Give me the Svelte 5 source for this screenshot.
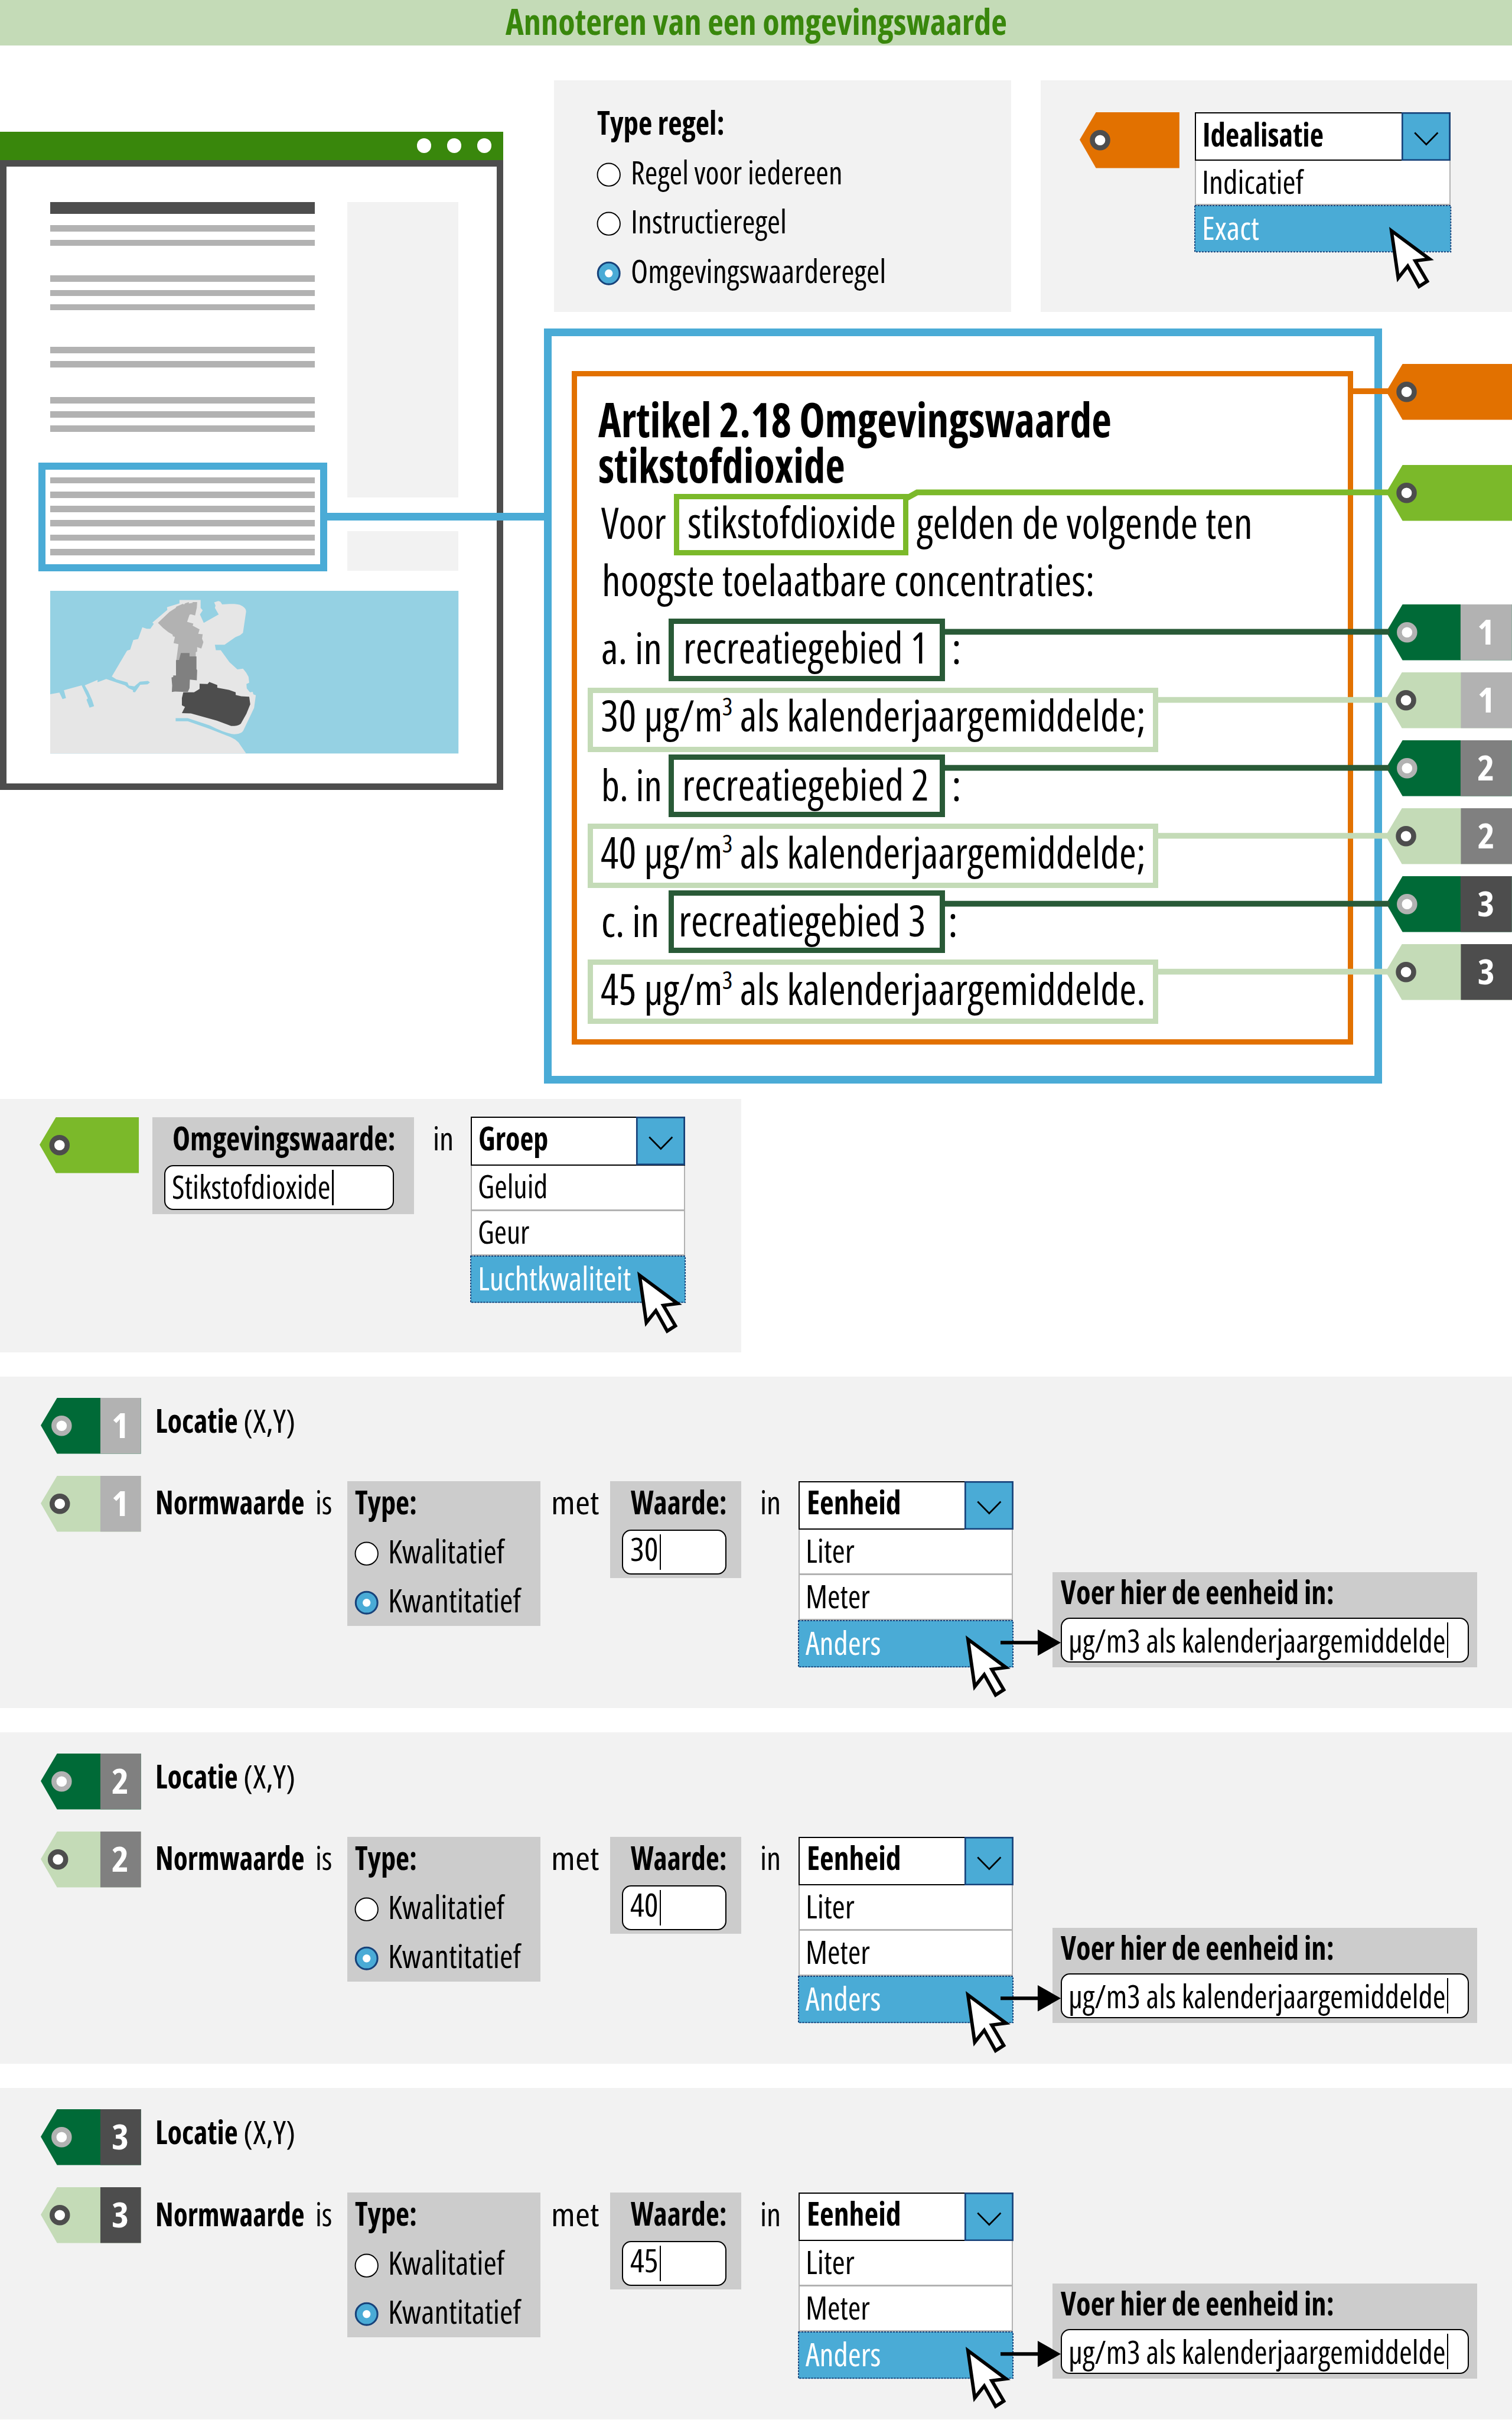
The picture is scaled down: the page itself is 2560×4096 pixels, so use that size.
<script>
  // Lengths are written in design units; one rem equals 100 units.
  const rem = (n) => `${n / 100}rem`;

  const METRICS = {
    title: { h: 80, base: 65 },
    head: { h: 100, base: 86.5 },
    body: { h: 90, base: 78 },
    md: { h: 72, base: 62.5 },
  };

  const NUMBER_BG = { 1: '#b2b2b2', 2: '#808080', 3: '#4d4d4d' };
  const ORANGE = '#e27100';
  const LIME = '#7bb92a';
  const FOREST = '#006a37';
  const MINT = '#c4dbb7';

  const lineGroups = [2, 3, 2, 3];

  const rules = [
    { letter: 'a. in', lw: 134, area: 'recreatiegebied 1', pad: 20, aw: 539, colon: 14, dy: 22, value: '30', end: ';', vdy: 19.9 },
    { letter: 'b. in', lw: 134, area: 'recreatiegebied 2', pad: 18, aw: 544, colon: 14, dy: 23.7, value: '40', end: ';', vdy: 22.1 },
    { letter: 'c. in', lw: 128, area: 'recreatiegebied 3', pad: 10, aw: 545, colon: 7, dy: 24.3, value: '45', end: '.', vdy: 23.8 },
  ];

  const norms = [
    { n: 1, value: '30', hole: 42 },
    { n: 2, value: '40', hole: 38 },
    { n: 3, value: '45', hole: 42 },
  ];

  const units = [
    { label: 'Liter', w: 108 },
    { label: 'Meter', w: 142 },
    { label: 'Anders', w: 166, active: true },
  ];
  const groups = [
    { label: 'Geluid', w: 154 },
    { label: 'Geur', w: 114 },
    { label: 'Luchtkwaliteit', w: 338, active: true },
  ];
  const precision = [
    { label: 'Indicatief', w: 224 },
    { label: 'Exact', w: 126, active: true },
  ];
</script>

{#snippet txt(s, w, kind = 'md', bold = false)}
  <svg class="txt {kind}" class:bold width={rem(w)} height={rem(METRICS[kind].h)} viewBox="0 0 {w} {METRICS[kind].h}">
    <text x="0" y={METRICS[kind].base} textLength={w} lengthAdjust="spacingAndGlyphs">{s}</text>
  </svg>
{/snippet}

{#snippet tag(fill, w, split, hole, n, nx)}
  <svg class="tag" width={rem(w)} height={rem(123)} viewBox="0 0 {w} 123">
    <path d="M0 60.5 36 0H{w}V123H36Z" {fill} />
    {#if n}
      <rect x={split} y="0" width={w - split} height="123" fill={NUMBER_BG[n]} />
      <text x={split + nx} y="89" textLength="38" lengthAdjust="spacingAndGlyphs">{n}</text>
    {/if}
    <circle cx={hole} cy="61.6" r="17" fill="#fff" stroke={fill === FOREST ? '#b2b2b2' : '#4d4d4d'} stroke-width="11" />
  </svg>
{/snippet}

{#snippet radio(label, w, on)}
  <div class="radio" class:on>
    <svg width={rem(54)} height={rem(54)} viewBox="0 0 54 54">
      <circle cx="27" cy="27" r={on ? 24 : 25} />
      {#if on}<circle class="dot" cx="27" cy="27" r="8.7" />{/if}
    </svg>
    {@render txt(label, w)}
  </div>
{/snippet}

{#snippet select(label, lw, options)}
  <div class="select">
    <div class="current">
      {@render txt(label, lw, 'md', true)}
      <svg class="toggle" viewBox="0 0 108 107" width={rem(108)} height={rem(107)}>
        <rect x="1.7" y="1.7" width="104.6" height="103.6" />
        <path d="M29 45 54.500 71 80 45" />
      </svg>
    </div>
    {#each options as o}
      <div class="option" class:active={o.active}>
        {#if o.active}
          <svg class="focus"><rect width="100%" height="100%" /></svg>
        {/if}
        {@render txt(o.label, o.w)}
      </div>
    {/each}
    <svg class="cursor" viewBox="0 0 99 139" width={rem(99)} height={rem(139)}>
      <path d="M5 11 89 73.500 57.500 77.500 84 122.500 66 134 41 89 20 115.500Z" />
    </svg>
  </div>
{/snippet}

<main>
  <header>{@render txt('Annoteren van een omgevingswaarde', 1106, 'title', true)}</header>

  <section class="hero">
    <div class="left">
      <div class="browser">
        <div class="bar"><i></i><i></i><i></i></div>
        <div class="page">
          <div class="columns">
            <div class="lines">
              <b></b>
              {#each lineGroups as count}
                <div class="group">{#each { length: count } as _}<i></i>{/each}</div>
              {/each}
              <div class="group marked">{#each { length: 6 } as _}<i></i>{/each}</div>
            </div>
            <div class="aside"><div></div><div></div></div>
          </div>
          <svg class="map" viewBox="144.500 701 1176.500 625" preserveAspectRatio="none">
            <rect x="144.500" y="701" width="1176.500" height="625" fill="#95d1e3" />
            <path
              fill="#e6e6e6"
              d="M144.500 1098 171 1092 180 1117 190 1113 184 1083 235 1064 253 1114 249 1119 258 1150 271 1144 265 1120 254 1087 244 1064 281 1043V1052L306 1040 360 1064 370 1075 383 1083V1090L389 1091 404 1062 425 1060 432 1053 426 1047 403 1050 387 1068 371 1065 367 1053 335 1041 322 1030 366 931 375 927 384 890 398 886 410 841 423 847H433L443 828 439 823 482 774 481 764 517 749V736H578V767L584 776 576 792 587 824 630 792 619 766 621 758 617 745 629 740 635 743 640 753C665 750 685 751 691 755 704 763 709 770 709 781L700 862 692 871 678 879 647 908H619L622 929H636L661 975 684 1003 700 1000 709 1015 716 1031 718 1054 710 1059 711 1076 720 1091 728 1089 730 1099 737 1102 732 1151 701 1238C697 1247 688 1252 675 1252 655 1250 630 1235 604 1218L541 1190H506V1202H541L603 1231 664 1263 677 1272 687 1283 709 1326H144.500Z"
            />
            <path
              fill="#b2b2b2"
              d="M455 824 488 782 506 767 508 762 527 751 530 754 533 749 544 744V750L555 747V744H568L567 765 562 796 550 791 546 793 539 820 557 827 555 835 575 849 571 866 584 868 582 885 586 898 580 923 568 917V934L564 937V955L508 967 514 906 500 902 504 878 498 876 497 869 485 860 470 844Z"
            />
            <path
              fill="#808080"
              d="M521 940H546V953H566V1002L568 1006 567 1045 547 1042 546 1075 541 1090 504 1088 495 1090 496 1065 494 1034 499 1032V1026H507V967L516 966Z"
            />
            <path
              fill="#4d4d4d"
              d="M528 1091H559L575 1078V1058L598 1059 603 1051 626 1063V1073L660 1082 679 1091V1101L695 1106 718 1108 721 1137 710 1173 694 1211C688 1218 680 1221 666 1220L625 1200 550 1172 524 1171 533 1147 524 1141V1113Z"
            />
          </svg>
        </div>
        <div class="link"></div>
      </div>
    </div>

    <div class="right">
      <div class="panels">
        <div class="panel kind">
          {@render txt('Type regel:', 281, 'md', true)}
          {@render radio('Regel voor iedereen', 467)}
          {@render radio('Instructieregel', 344)}
          {@render radio('Omgevingswaarderegel', 563, true)}
        </div>
        <div class="panel precision">
          {@render tag(ORANGE, 220, 0, 45)}
          {@render select('Idealisatie', 267, precision)}
        </div>
      </div>

      <div class="annotated">
        <article>
          <div class="frame">
            <h1>
              {@render txt('Artikel 2.18 Omgevingswaarde', 1132, 'head', true)}
              {@render txt('stikstofdioxide', 544, 'head', true)}
            </h1>
            <div class="row first">
              {@render txt('Voor', 143, 'body')}
              <div class="box lime">{@render txt('stikstofdioxide', 460, 'body')}</div>
              {@render txt('gelden de volgende ten', 741, 'body')}
            </div>
            <div class="row second">{@render txt('hoogste toelaatbare concentraties:', 1087, 'body')}</div>
            {#each rules as r}
              <div class="row area" style:--dy={rem(r.dy)}>
                <div class="letter">{@render txt(r.letter, r.lw, 'body')}</div>
                <div class="box forest" style:padding-left={rem(r.pad)}>{@render txt(r.area, r.aw, 'body')}</div>
                <div class="colon" style:margin-left={rem(r.colon)}>{@render txt(':', 22, 'body')}</div>
              </div>
              <div class="row value" style:--dy={rem(r.vdy)}>
                <div class="box mint">
                  <svg class="txt body" width={rem(1208)} height={rem(90)} viewBox="0 0 1208 90">
                    <text y="78"
                      ><tspan x="0" textLength="269" lengthAdjust="spacingAndGlyphs">{r.value} µg/m</tspan><tspan class="sup" x="268" y="43" textLength="23" lengthAdjust="spacingAndGlyphs">3</tspan><tspan x="307" y="78" textLength="895" lengthAdjust="spacingAndGlyphs">als kalenderjaargemiddelde{r.end}</tspan></text
                    >
                  </svg>
                </div>
              </div>
            {/each}
          </div>
        </article>
        <div class="tags">
          {@render tag(ORANGE, 278, 0, 45)}
          {@render tag(LIME, 278, 0, 45)}
          {#each norms as { n }}
            {@render tag(FOREST, 277, 164, 46, n, 37)}
            {@render tag(MINT, 279, 166, 45, n, 37)}
          {/each}
        </div>
        <svg class="wires" viewBox="1200 725 2135 1665">
          <path stroke={ORANGE} d="M2980 863.200H3062" />
          <path stroke={LIME} d="M1997 1097.500H2003L2023 1086.500H3064" />
          {#each norms as _, i}
            <path stroke="#295a37" d="M2082 {1393.9 + i * 299.8}H3065" />
            <path stroke={MINT} d="M2550 {1544 + i * 299.6}H3064" />
          {/each}
        </svg>
      </div>
    </div>
  </section>

  <section class="panel topic">
    {@render tag(LIME, 219, 0, 44)}
    <div class="field wide">
      {@render txt('Omgevingswaarde:', 492, 'md', true)}
      <div class="input">{@render txt('Stikstofdioxide', 350)}<i></i></div>
    </div>
    <div class="word">{@render txt('in', 46)}</div>
    {@render select('Groep', 154, groups)}
  </section>

  {#each norms as { n, value, hole }}
    <section class="panel norm">
      <div class="location">
        {@render tag(FOREST, 221, 131.5, 46, n, 25)}
        <div class="name">{@render txt('Locatie', 182, 'md', true)}</div>
        <div class="coords">{@render txt('(X,Y)', 115)}</div>
      </div>
      <div class="details">
        {@render tag(MINT, 221, 131.5, hole, n, 25)}
        <div class="name">{@render txt('Normwaarde', 329, 'md', true)}</div>
        <div class="is">{@render txt('is', 37)}</div>
        <div class="field type">
          {@render txt('Type:', 137, 'md', true)}
          {@render radio('Kwalitatief', 257)}
          {@render radio('Kwantitatief', 293, true)}
        </div>
        <div class="met">{@render txt('met', 106)}</div>
        <div class="field amount">
          {@render txt('Waarde:', 212, 'md', true)}
          <div class="input">{@render txt(value, 62)}<i></i></div>
        </div>
        <div class="in">{@render txt('in', 46)}</div>
        {@render select('Eenheid', 208, units)}
        <div class="field unit">
          {@render txt('Voer hier de eenheid in:', 603, 'md', true)}
          <div class="input">{@render txt('µg/m3 als kalenderjaargemiddelde', 832)}<i></i></div>
          <svg class="arrow" viewBox="0 0 133 58" width={rem(133)} height={rem(58)}>
            <path d="M0 25H82V0L133 29 82 58V33H0Z" />
          </svg>
        </div>
      </div>
    </section>
  {/each}
</main>

<style>
  :global(html) {
    font-size: calc(100vw / 33.35);
    overflow: hidden;
  }
  :global(body) {
    background: #fff;
  }
  main {
    width: 33.35rem;
    height: 53.35rem;
    overflow: hidden;
    color: #000;
    font-family: 'Open Sans', 'Noto Sans', 'Liberation Sans', sans-serif;
    line-height: 1;
  }
  main :global(*) {
    box-sizing: border-box;
  }
  svg {
    display: block;
    flex: none;
    overflow: visible;
  }
  .txt {
    fill: #000;
    font-stretch: 75%;
    font-weight: 400;
  }
  .txt.bold {
    font-weight: 700;
  }
  .title {
    fill: #39870c;
    font-size: 79px;
  }
  .head {
    font-size: 105px;
  }
  .body {
    font-size: 95.5px;
  }
  .md {
    font-size: 72px;
  }
  .sup {
    font-size: 54px;
  }
  .tag text {
    fill: #fff;
    font-size: 77px;
    font-weight: 700;
    font-stretch: 75%;
  }

  header {
    display: flex;
    justify-content: center;
    height: 1rem;
    padding-top: 0.12rem;
    background: #c4dbb7;
  }
  .hero {
    display: flex;
    height: 23.233rem;
    padding-top: 0.77rem;
  }
  .left {
    width: 12.003rem;
    padding-top: 1.13rem;
  }

  /* Browser sketch */
  .browser {
    position: relative;
    width: 11.095rem;
  }
  .bar {
    display: flex;
    justify-content: flex-end;
    align-items: center;
    gap: 0.345rem;
    height: 0.63rem;
    padding-right: 0.25rem;
    background: #39870c;
  }
  .bar i {
    width: 0.32rem;
    height: 0.32rem;
    border-radius: 50%;
    background: #fff;
  }
  .page {
    height: 13.89rem;
    padding: 0.776rem 0.84rem 0 0.962rem;
    border: 0.145rem solid #4d4d4d;
  }
  .columns {
    display: flex;
    justify-content: space-between;
  }
  .lines {
    width: 5.84rem;
  }
  .lines b {
    display: block;
    height: 0.272rem;
    margin-bottom: 0.248rem;
    background: #4d4d4d;
  }
  .group {
    display: grid;
    gap: 0.176rem;
  }
  .group i {
    height: 0.14rem;
    background: #b2b2b2;
  }
  .group:nth-of-type(2) {
    margin-top: 0.65rem;
  }
  .group:nth-of-type(3) {
    margin-top: 0.803rem;
  }
  .group:nth-of-type(4) {
    margin-top: 0.65rem;
  }
  .group.marked {
    margin: 0.675rem -0.27rem 0 -0.255rem;
    padding: 0.165rem 0.11rem 0.2rem 0.095rem;
    border: 0.16rem solid #4aabd6;
  }
  .aside div {
    width: 2.457rem;
    height: 6.523rem;
    background: #f2f2f2;
  }
  .aside div + div {
    height: 0.873rem;
    margin-top: 0.746rem;
  }
  .map {
    width: 9.005rem;
    height: 3.587rem;
    margin-top: 0.432rem;
  }
  .link {
    position: absolute;
    left: 7.2rem;
    top: 8.408rem;
    width: 4.83rem;
    height: 0.165rem;
    background: #4aabd6;
  }

  /* Panels at the top */
  .right {
    flex: 1;
  }
  .panels {
    display: flex;
    justify-content: space-between;
    height: 5.115rem;
    padding-left: 0.217rem;
  }
  .panel {
    background: #f2f2f2;
  }
  .kind {
    width: 10.09rem;
    padding: 0.58rem 0 0 0.95rem;
  }
  .radio {
    display: flex;
    gap: 0.21rem;
    fill: #fff;
    stroke: #000;
    stroke-width: 2.500;
  }
  .radio .txt {
    stroke: none;
  }
  .radio > svg:first-child {
    margin-top: 0.145rem;
  }
  .radio.on > svg:first-child {
    fill: #4aabd6;
    stroke: #17427a;
    stroke-width: 4;
  }
  .radio .dot {
    fill: #fff;
    stroke: none;
  }
  .kind .radio {
    height: 1.085rem;
    margin-left: -0.01rem;
  }
  .kind .txt + .radio {
    margin-top: 0.37rem;
  }
  .precision {
    display: flex;
    width: 10.4rem;
    padding: 0.71rem 1.35rem 0 0.866rem;
  }

  /* Drop-down */
  .select {
    position: relative;
    align-self: flex-start;
    width: 4.73rem;
  }
  .precision .select {
    width: 5.645rem;
    margin: -0.005rem 0 0 0.335rem;
  }
  .current {
    display: flex;
    justify-content: space-between;
    height: 1.074rem;
    padding-left: 0.15rem;
    border: 0.03rem solid #000;
    background: #fff;
  }
  .current .txt {
    margin-top: 0.085rem;
  }
  .precision .current .txt {
    margin-top: 0.11rem;
  }
  .toggle {
    margin: -0.03rem;
    fill: #4aabd6;
    stroke: #17427a;
    stroke-width: 3.500;
  }
  .toggle path {
    fill: none;
    stroke: #000;
    stroke-width: 3.500;
  }
  .option {
    position: relative;
    height: 1.003rem;
    padding: 0.1rem 0 0 0.135rem;
    border: 0.03rem solid #b2b2b2;
    border-top: 0;
    border-bottom-width: 0.04rem;
    background: #fff;
  }
  .precision .option {
    height: 0.982rem;
  }
  .option.active,
  .precision .option.active {
    height: 1.02rem;
    padding: 0.13rem 0 0 0.16rem;
    border: 0;
    background: #4aabd6;
  }
  .active .txt {
    fill: #fff;
  }
  .focus {
    position: absolute;
    inset: 0;
    width: 100%;
    height: 100%;
    fill: none;
    stroke: #17427a;
    stroke-width: 2;
    stroke-dasharray: 3 2;
  }
  .cursor {
    position: absolute;
    right: 0.055rem;
    bottom: -0.67rem;
    z-index: 2;
    fill: #fff;
    stroke: #000;
    stroke-width: 7.500;
    stroke-miterlimit: 8;
  }
  .precision .cursor {
    right: 0.36rem;
    bottom: -0.81rem;
  }

  /* Article with its tags */
  .annotated {
    position: relative;
    display: flex;
    margin-top: 0.365rem;
  }
  article {
    width: 18.485rem;
    height: 16.647rem;
    padding: 0.759rem 0.442rem;
    border: 0.175rem solid #4aabd6;
  }
  .frame {
    width: 17.236rem;
    height: 14.86rem;
    padding: 0.486rem 0 0 0.23rem;
    border: 0.13rem solid #e27100;
  }
  h1 {
    height: 2.11rem;
    margin: 0 0 0 0.24rem;
  }
  .row {
    display: flex;
  }
  .row.first {
    --dy: 0.209rem;
    height: 1.361rem;
    padding-left: 0.305rem;
  }
  .row.first > .txt:last-child {
    margin-left: 0.18rem;
  }
  .row.second {
    margin: 0.117rem 0 0.376rem;
    padding-left: 0.315rem;
  }
  .row.first > .txt,
  .letter,
  .colon {
    margin-top: var(--dy);
  }
  .box {
    border: 0.13rem solid;
    padding-top: calc(var(--dy) - 0.13rem);
  }
  .lime {
    width: 5.177rem;
    margin-left: 0.17rem;
    padding-left: 0.185rem;
    border-color: #7bb92a;
  }
  .area {
    height: 1.377rem;
    margin-bottom: 0.141rem;
    padding-left: 0.305rem;
  }
  .letter {
    width: 1.489rem;
  }
  .forest {
    width: 6.09rem;
    border-color: #295a37;
  }
  .mint {
    width: 12.584rem;
    height: 1.427rem;
    padding-left: 0.17rem;
    border-color: #c4dbb7;
  }
  .value {
    height: 1.427rem;
    margin-bottom: 0.052rem;
  }
  .tags {
    display: flex;
    flex-direction: column;
    align-items: flex-end;
    gap: 0.268rem;
    width: 2.865rem;
    padding-top: 0.77rem;
  }
  .tags .tag:nth-child(2) {
    margin-top: 0.733rem;
    margin-bottom: 1.575rem;
  }
  .wires {
    position: absolute;
    inset: 0;
    width: 21.35rem;
    height: 16.65rem;
    fill: none;
    stroke-width: 12.700;
  }

  /* Form panels */
  .field {
    position: relative;
    align-self: flex-start;
    background: #ccc;
  }
  .input {
    display: flex;
    height: 0.993rem;
    padding-left: 0.15rem;
    border: 0.027rem solid #000;
    border-radius: 0.2rem;
    background: #fff;
  }
  .input i {
    width: 0.028rem;
    height: 0.78rem;
    margin: 0.08rem 0 0 0.03rem;
    background: #000;
  }
  .topic {
    display: flex;
    width: 16.35rem;
    height: 5.584rem;
    padding: 0.4rem 0 0 0.873rem;
  }
  .field.wide {
    width: 5.777rem;
    height: 2.143rem;
    margin-left: 0.295rem;
    padding: 0.103rem 0.45rem 0 0.263rem;
  }
  .wide > .txt {
    margin: 0 0 0.23rem 0.18rem;
  }
  .wide .input .txt {
    margin-top: 0.09rem;
  }
  .word {
    width: 1.242rem;
    padding: 0.103rem 0 0 0.415rem;
  }
  .topic .select {
    margin-top: -0.01rem;
  }
  .norm {
    height: 7.303rem;
    margin-top: 0.54rem;
    padding: 0.46rem 0 0 0.905rem;
  }
  .location,
  .details {
    display: flex;
  }
  .location {
    margin-bottom: 0.498rem;
  }
  .name {
    margin: 0.154rem 0 0 0.305rem;
  }
  .coords {
    margin: 0.154rem 0 0 0.125rem;
  }
  .details .name,
  .is,
  .met,
  .in {
    margin-top: 0.226rem;
  }
  .is {
    margin-left: 0.25rem;
  }
  .met {
    margin-left: 0.235rem;
  }
  .in {
    margin-left: 0.415rem;
  }
  .details .select {
    margin: 0.115rem 0 0 0.39rem;
  }
  .type {
    width: 4.263rem;
    height: 3.184rem;
    margin: 0.119rem 0 0 0.325rem;
    padding: 0.107rem 0 0 0.157rem;
  }
  .type > .txt {
    margin-left: 0.02rem;
  }
  .type .radio {
    height: 1.08rem;
  }
  .type .txt + .radio {
    margin-top: 0.36rem;
  }
  .amount {
    width: 2.893rem;
    height: 2.138rem;
    margin: 0.119rem 0 0 0.245rem;
    padding: 0.107rem 0.326rem 0 0.263rem;
  }
  .amount > .txt {
    margin: 0 0 0.233rem 0.19rem;
  }
  .amount .input .txt {
    margin-top: 0.045rem;
  }
  .unit {
    width: 9.37rem;
    height: 2.1rem;
    margin: 2.119rem 0 0 0.865rem;
    padding: 0.082rem 0.182rem 0 0.182rem;
  }
  .unit > .txt {
    margin-bottom: 0.205rem;
  }
  .unit .input .txt {
    margin-top: 0.11rem;
  }
  .arrow {
    position: absolute;
    left: -1.14rem;
    top: 1.264rem;
    z-index: 1;
  }
</style>
